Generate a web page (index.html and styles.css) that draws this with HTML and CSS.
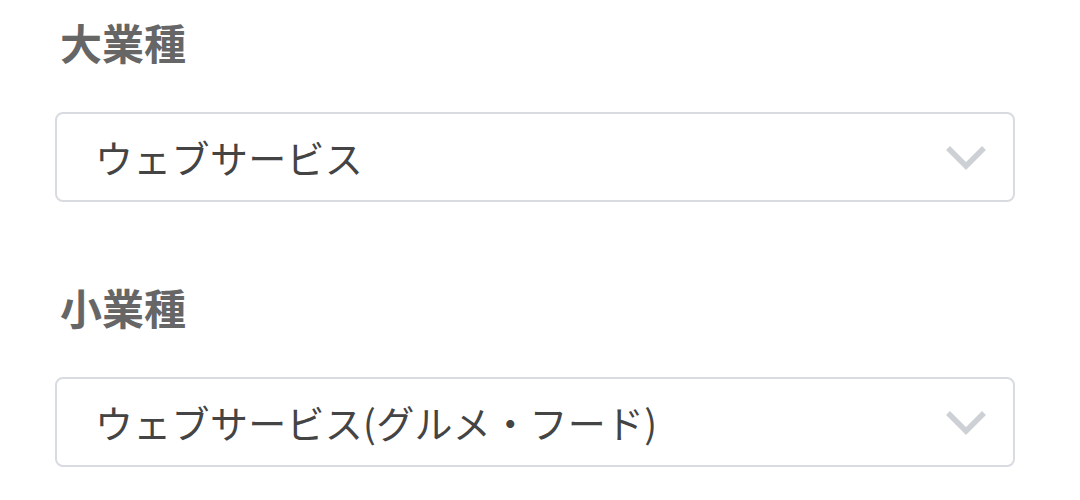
FILE: index.html
```html
<!DOCTYPE html>
<html lang="ja">
<head>
<meta charset="utf-8">
<link rel="stylesheet" href="styles.css">
</head>
<body>
<div class="form">
  <div class="field">
    <div class="label">大業種</div>
    <div class="select">
      <span class="value">ウェブサービス</span>
      <svg class="chev" width="42" height="26" viewBox="0 0 42 26"><path d="M3 3 L21 21 L39 3" fill="none" stroke="#cdd1d5" stroke-width="5.5"/></svg>
    </div>
  </div>
  <div class="field">
    <div class="label">小業種</div>
    <div class="select">
      <span class="value">ウェブサービス(グルメ・フード)</span>
      <svg class="chev" width="42" height="26" viewBox="0 0 42 26"><path d="M3 3 L21 21 L39 3" fill="none" stroke="#cdd1d5" stroke-width="5.5"/></svg>
    </div>
  </div>
</div>
</body>
</html>
```
FILE: styles.css
```css
html, body {
  margin: 0;
  padding: 0;
  background: #ffffff;
}
body {
  font-family: "Noto Sans CJK JP", "Noto Sans", sans-serif;
}
.form {
  padding: 18px 0 0 55px;
  width: 960px;
  display: flex;
  flex-direction: column;
  gap: 81px;
}
.field {
  display: flex;
  flex-direction: column;
  gap: 46px;
}
.label {
  font-size: 42px;
  line-height: 48px;
  font-weight: 700;
  color: #666666;
  padding-left: 5px;
}
.select {
  box-sizing: border-box;
  height: 90px;
  border: 2px solid #d8dce0;
  border-radius: 8px;
  display: flex;
  align-items: center;
  justify-content: space-between;
  padding: 0 26px 0 38px;
}
.value {
  font-size: 38px;
  color: #444444;
  line-height: 1;
  letter-spacing: 0.3px;
}
.chev {
  display: block;
  margin-top: 2px;
}
```
